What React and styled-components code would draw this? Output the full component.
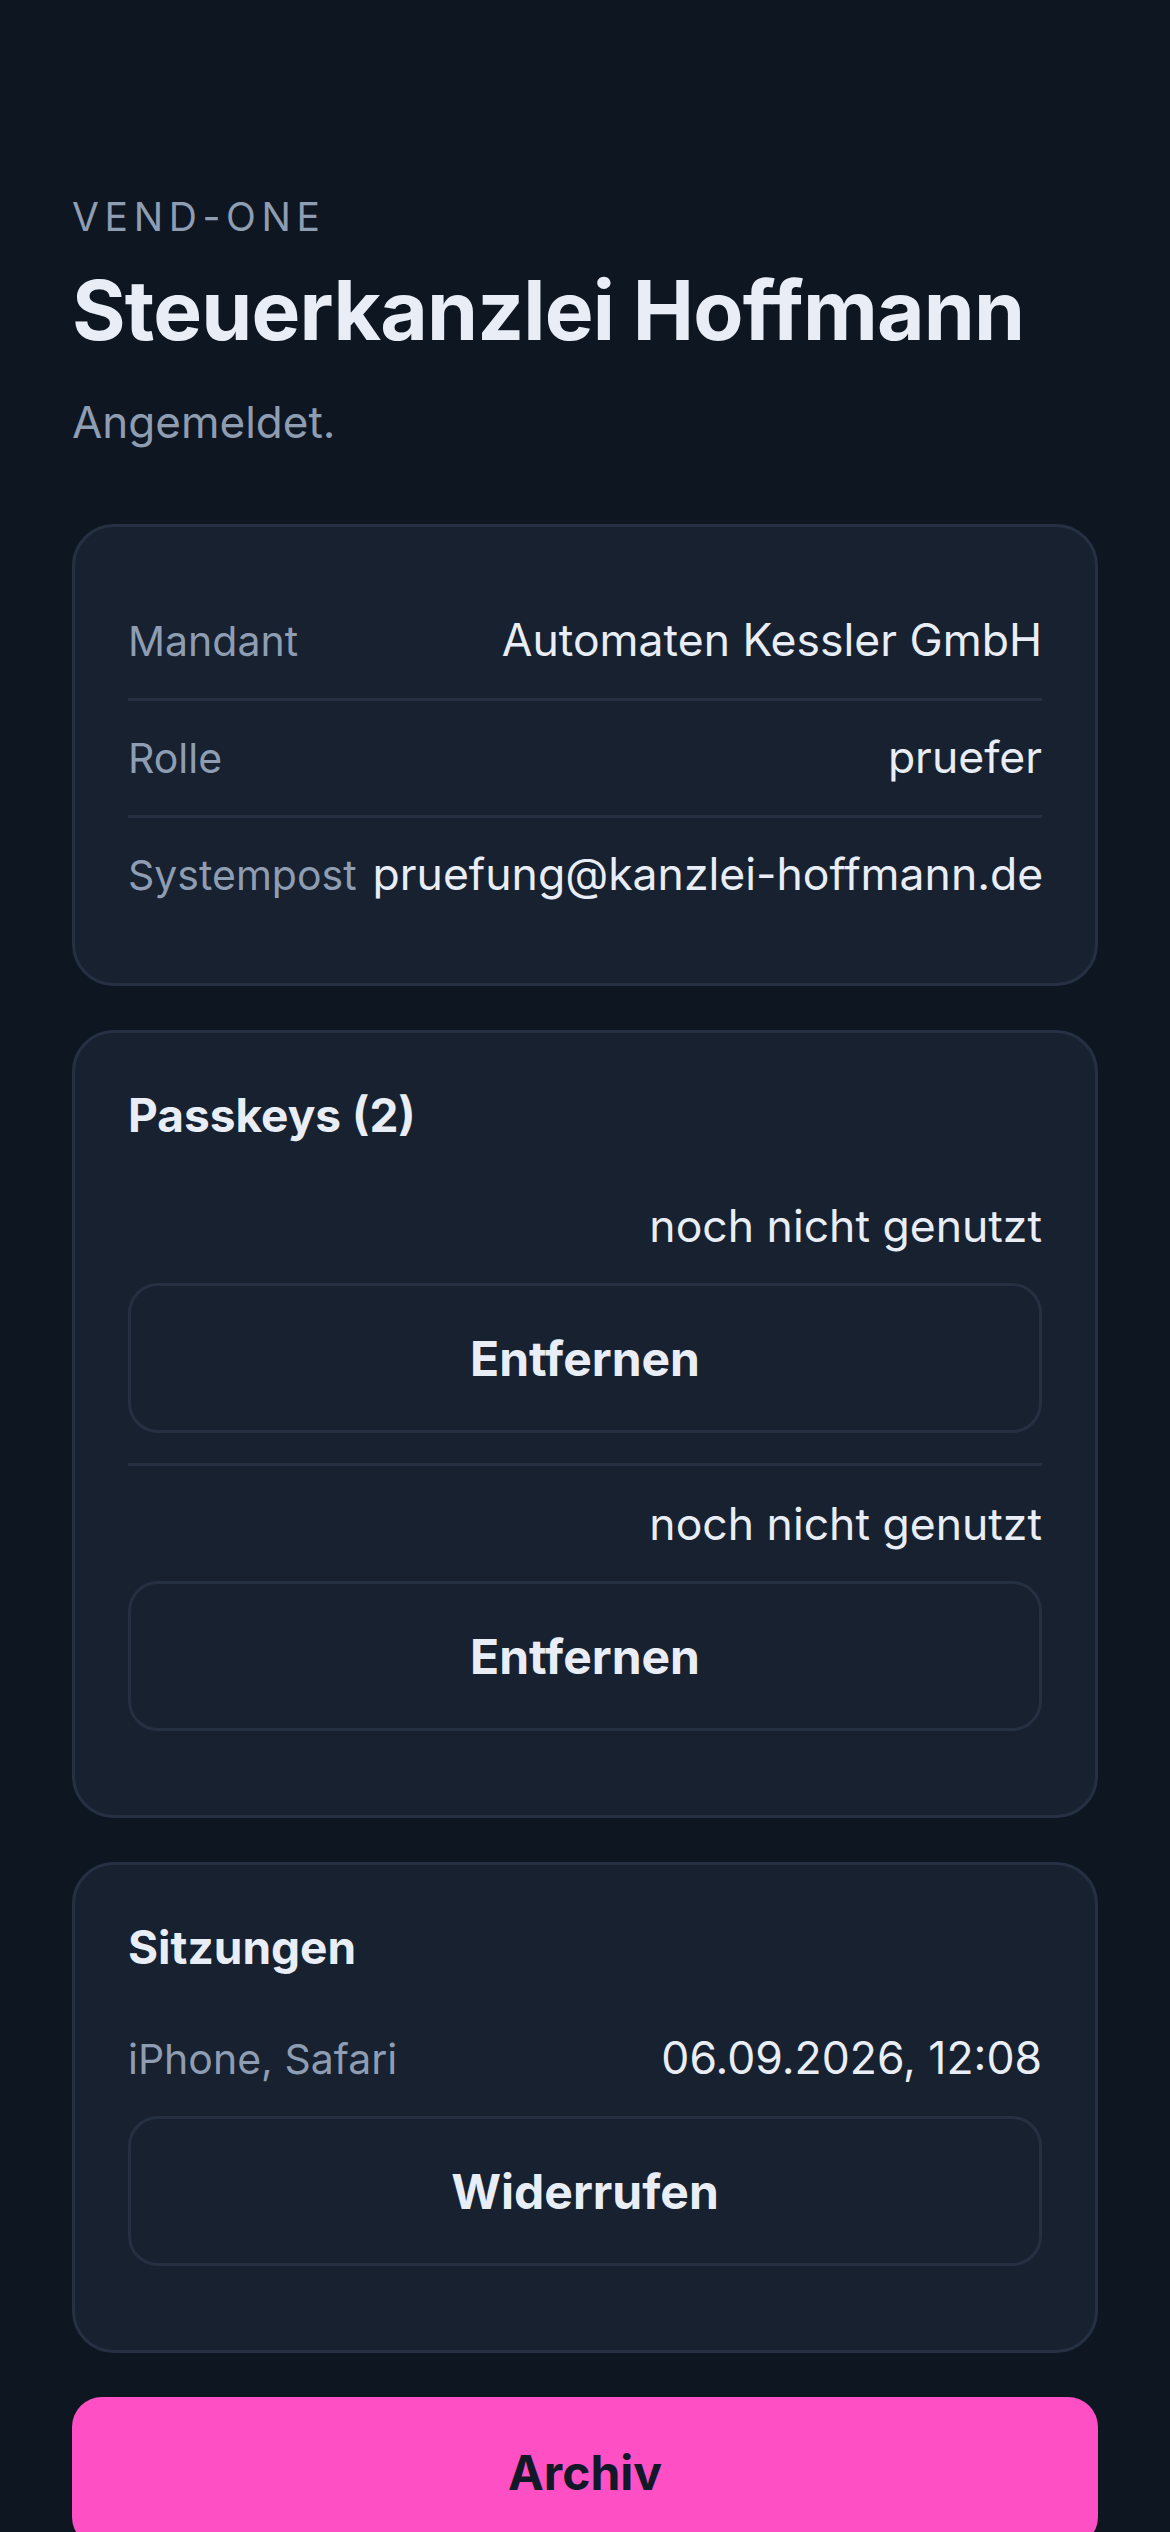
import React from 'react'
import styled, { createGlobalStyle } from 'styled-components'

const GlobalStyle = createGlobalStyle`
    * {
        box-sizing: border-box;
    }
    body {
        margin: 0;
        background: #0e1621;
        font-family: Inter, "Noto Sans", "Liberation Sans", sans-serif;
        color: #e9eef6;
    }
`;

const details = [
    { label: 'Mandant', value: 'Automaten Kessler GmbH' },
    { label: 'Rolle', value: 'pruefer' },
    { label: 'Systempost', value: 'pruefung@kanzlei-hoffmann.de' },
]

const passkeys = [
    { id: 1, lastUsed: 'noch nicht genutzt' },
    { id: 2, lastUsed: 'noch nicht genutzt' },
]

const sessions = [
    { id: 1, device: 'iPhone, Safari', date: '06.09.2026, 12:08' },
]

const App = () => {
    return (
        <>
            <GlobalStyle />
            <Page>
                <Header>
                    <Brand>VEND-ONE</Brand>
                    <Title>Steuerkanzlei Hoffmann</Title>
                    <Status>Angemeldet.</Status>
                </Header>

                <DetailCard>
                    {details.map((d, i) => (
                        <DetailRow key={d.label} first={i === 0}>
                            <Label>{d.label}</Label>
                            <Value>{d.value}</Value>
                        </DetailRow>
                    ))}
                </DetailCard>

                <Card>
                    <CardTitle>Passkeys ({passkeys.length})</CardTitle>
                    {passkeys.map((p, i) => (
                        <Item key={p.id} first={i === 0}>
                            <ItemLine>
                                <Label />
                                <Value>{p.lastUsed}</Value>
                            </ItemLine>
                            <OutlineButton>Entfernen</OutlineButton>
                        </Item>
                    ))}
                </Card>

                <Card>
                    <CardTitle>Sitzungen</CardTitle>
                    {sessions.map((s, i) => (
                        <Item key={s.id} first={i === 0}>
                            <ItemLine>
                                <Label>{s.device}</Label>
                                <Value>{s.date}</Value>
                            </ItemLine>
                            <OutlineButton>Widerrufen</OutlineButton>
                        </Item>
                    ))}
                </Card>

                <PrimaryButton>Archiv</PrimaryButton>
            </Page>
        </>
    )
}

export default App


const Page = styled.main`
    display: flex;
    flex-direction: column;
    gap: 44px;
    padding: 193px 72px 72px;
`;

const Header = styled.header`
    display: flex;
    flex-direction: column;
    margin-bottom: 30px;
`;

const Brand = styled.div`
    font-size: 39px;
    line-height: 48px;
    letter-spacing: 0.145em;
    color: #8e9db2;
`;

const Title = styled.h1`
    margin: 20px 0 0;
    font-size: 82px;
    line-height: 100px;
    font-weight: 700;
    letter-spacing: -0.01em;
    color: #e9eef6;
`;

const Status = styled.p`
    margin: 33px 0 0;
    font-size: 44px;
    line-height: 56px;
    color: #8e9db2;
`;

const Card = styled.section`
    display: flex;
    flex-direction: column;
    padding: 54px 53px;
    background: #172130;
    border: 3px solid #253143;
    border-radius: 42px;
`;

const DetailCard = styled(Card)`
    padding-top: 57px;
    padding-bottom: 51px;
`;

const DetailRow = styled.div`
    display: flex;
    justify-content: space-between;
    align-items: baseline;
    gap: 16px;
    padding: 28px 0;
    border-top: ${p => (p.first ? 'none' : '3px solid #253143')};
`;

const Label = styled.span`
    font-size: 41px;
    line-height: 57px;
    color: #8e9db2;
    white-space: nowrap;
`;

const Value = styled.span`
    font-size: 44.5px;
    line-height: 57px;
    color: #e9eef6;
    text-align: right;
    white-space: nowrap;
`;

const CardTitle = styled.h2`
    margin: 0 0 24px;
    font-size: 46px;
    line-height: 57px;
    font-weight: 700;
    color: #e9eef6;
`;

const Item = styled.div`
    display: flex;
    flex-direction: column;
    gap: 28px;
    padding: 30px 0;
    border-top: ${p => (p.first ? 'none' : '3px solid #253143')};
`;

const ItemLine = styled.div`
    display: flex;
    justify-content: space-between;
    align-items: baseline;
`;

const OutlineButton = styled.button`
    height: 150px;
    width: 100%;
    background: transparent;
    border: 3px solid #253143;
    border-radius: 30px;
    font-family: inherit;
    font-size: 48px;
    font-weight: 700;
    color: #e9eef6;
    cursor: pointer;
`;

const PrimaryButton = styled.button`
    height: 150px;
    width: 100%;
    background: #ff4fc4;
    border: none;
    border-radius: 30px;
    font-family: inherit;
    font-size: 48px;
    font-weight: 700;
    color: #111827;
    cursor: pointer;
`;
